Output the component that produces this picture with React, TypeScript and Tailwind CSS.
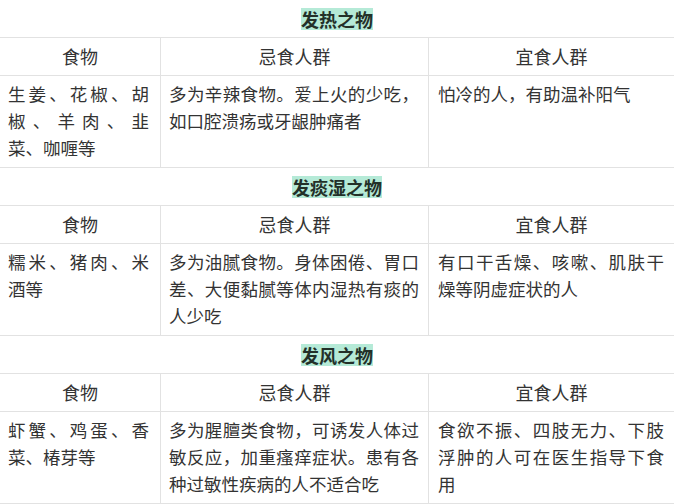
const sections = [
  {
    title: "发热之物",
    food: ["生姜、花椒、胡", "椒、羊肉、韭", "菜、咖喱等"],
    avoid: ["多为辛辣食物。爱上火的少吃，", "如口腔溃疡或牙龈肿痛者"],
    suit: ["怕冷的人，有助温补阳气"],
  },
  {
    title: "发痰湿之物",
    food: ["糯米、猪肉、米", "酒等"],
    avoid: ["多为油腻食物。身体困倦、胃口", "差、大便黏腻等体内湿热有痰的", "人少吃"],
    suit: ["有口干舌燥、咳嗽、肌肤干", "燥等阴虚症状的人"],
  },
  {
    title: "发风之物",
    food: ["虾蟹、鸡蛋、香", "菜、椿芽等"],
    avoid: ["多为腥膻类食物，可诱发人体过", "敏反应，加重瘙痒症状。患有各", "种过敏性疾病的人不适合吃"],
    suit: ["食欲不振、四肢无力、下肢", "浮肿的人可在医生指导下食", "用"],
  },
];

// each line is its own block so the wraps match; all but the last are justified
function Lines({ lines }: { lines: string[] }) {
  return (
    <>
      {lines.map((line, i) => (
        <div
          key={i}
          className={
            "whitespace-nowrap " +
            (i < lines.length - 1 ? "text-justify [text-align-last:justify]" : "text-left")
          }
        >
          {line}
        </div>
      ))}
    </>
  );
}

export default function App() {
  return (
    <div className="w-[674px] h-[504px] overflow-hidden bg-white text-[#333] font-['Noto_Sans_CJK_SC','Noto_Sans',sans-serif] text-[18px]">
      {sections.map((s) => (
        <div key={s.title}>
          <div className="h-[38px] border-b border-[#e2e2e2] flex items-center justify-center">
            <span className="inline-block bg-[#b5ead7] leading-[22px] font-bold text-[#233029]">{s.title}</span>
          </div>
          <div className="grid grid-cols-[161px_268px_1fr]">
            <div className="h-[38px] border-b border-r border-[#e2e2e2] flex items-center justify-center">食物</div>
            <div className="h-[38px] border-b border-r border-[#e2e2e2] flex items-center justify-center">忌食人群</div>
            <div className="h-[38px] border-b border-[#e2e2e2] flex items-center justify-center">宜食人群</div>

            <div className="h-[92px] overflow-hidden border-b border-r border-[#e2e2e2] pl-[8px] pr-[11px] pt-[4px] leading-[27px] text-[17.5px]">
              <Lines lines={s.food} />
            </div>
            <div className="h-[92px] overflow-hidden border-b border-r border-[#e2e2e2] pl-[8px] pr-[9px] pt-[4px] leading-[27px] text-[17.5px]">
              <Lines lines={s.avoid} />
            </div>
            <div className="h-[92px] overflow-hidden border-b border-[#e2e2e2] pl-[9px] pr-[10px] pt-[4px] leading-[27px] text-[17.5px]">
              <Lines lines={s.suit} />
            </div>
          </div>
        </div>
      ))}
    </div>
  );
}
